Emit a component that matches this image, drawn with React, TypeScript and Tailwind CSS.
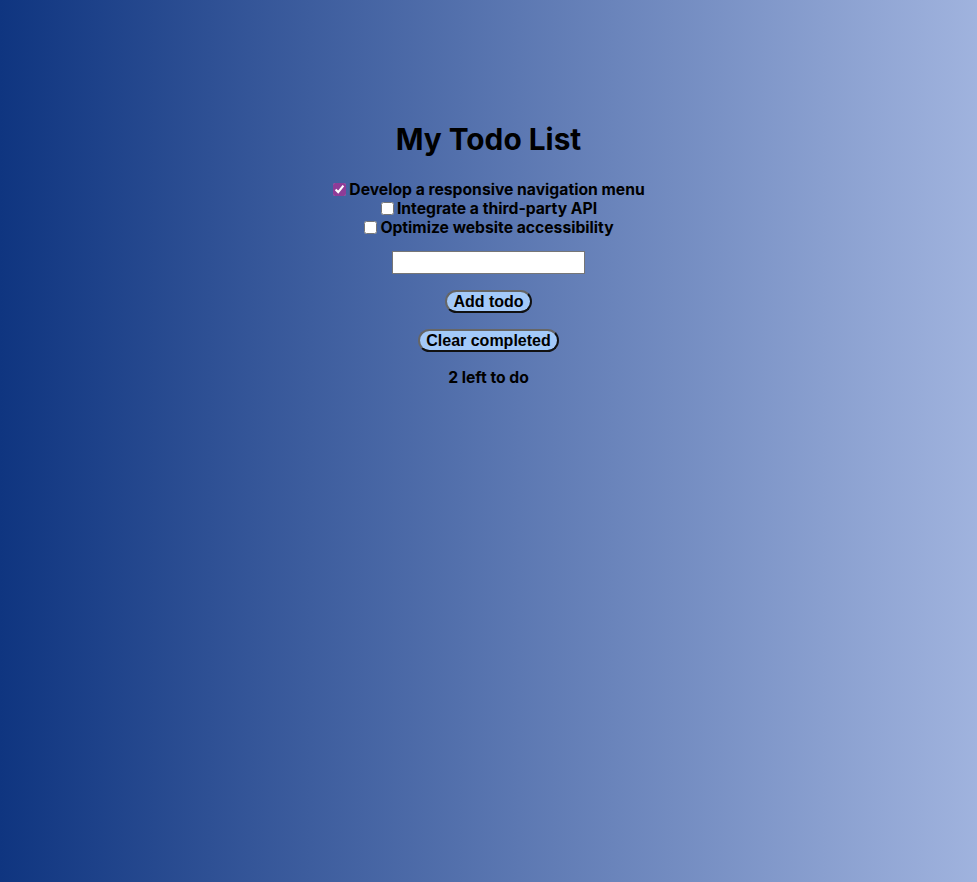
import React, { useState } from "react";

type Todo = { id: number; text: string; done: boolean };

export default function App() {
  const [todos, setTodos] = useState<Todo[]>([
    { id: 1, text: "Develop a responsive navigation menu", done: true },
    { id: 2, text: "Integrate a third-party API", done: false },
    { id: 3, text: "Optimize website accessibility", done: false },
  ]);
  const [value, setValue] = useState("");
  const left = todos.filter((t) => !t.done).length;

  return (
    <div className="min-h-screen w-full bg-[linear-gradient(to_right,#0f3580,#a0b3de)] font-['Inter',sans-serif] text-black">
      <div className="flex flex-col items-center pt-[119px]">
        <h1 className="text-[29.8px] font-bold leading-[40px]">My Todo List</h1>
        <ul className="mt-[21px] flex flex-col items-center">
          {todos.map((t) => (
            <li key={t.id} className="flex items-center h-[19px] text-[15.7px] font-bold leading-[19px]">
              <input
                type="checkbox"
                checked={t.done}
                onChange={() =>
                  setTodos((ts) => ts.map((x) => (x.id === t.id ? { ...x, done: !x.done } : x)))
                }
                className="w-[13px] h-[13px] ml-[1px] mr-[3px] accent-[#8e3c97]"
              />
              <span>{t.text}</span>
            </li>
          ))}
        </ul>
        <input
          value={value}
          onChange={(e) => setValue(e.target.value)}
          className="mt-[14px] w-[193px] h-[23px] bg-white border border-[#767676] px-1 text-[13px] font-['Liberation_Sans',sans-serif]"
        />
        <button
          onClick={() => {
            if (value.trim()) {
              setTodos((ts) => [...ts, { id: Date.now(), text: value.trim(), done: false }]);
              setValue("");
            }
          }}
          className="mt-[16px] h-[23px] px-[6px] rounded-[12px] bg-[#a3c9f9] border-2 [border-style:outset] border-[#666] font-['Liberation_Sans',sans-serif] font-bold text-[16px] leading-[17px]"
        >
          Add todo
        </button>
        <button
          onClick={() => setTodos((ts) => ts.filter((t) => !t.done))}
          className="mt-[16px] h-[23px] px-[6px] rounded-[12px] bg-[#a3c9f9] border-2 [border-style:outset] border-[#666] font-['Liberation_Sans',sans-serif] font-bold text-[16px] leading-[17px]"
        >
          Clear completed
        </button>
        <p className="mt-[16px] text-[15.7px] font-bold leading-[19px]">{left} left to do</p>
      </div>
    </div>
  );
}
